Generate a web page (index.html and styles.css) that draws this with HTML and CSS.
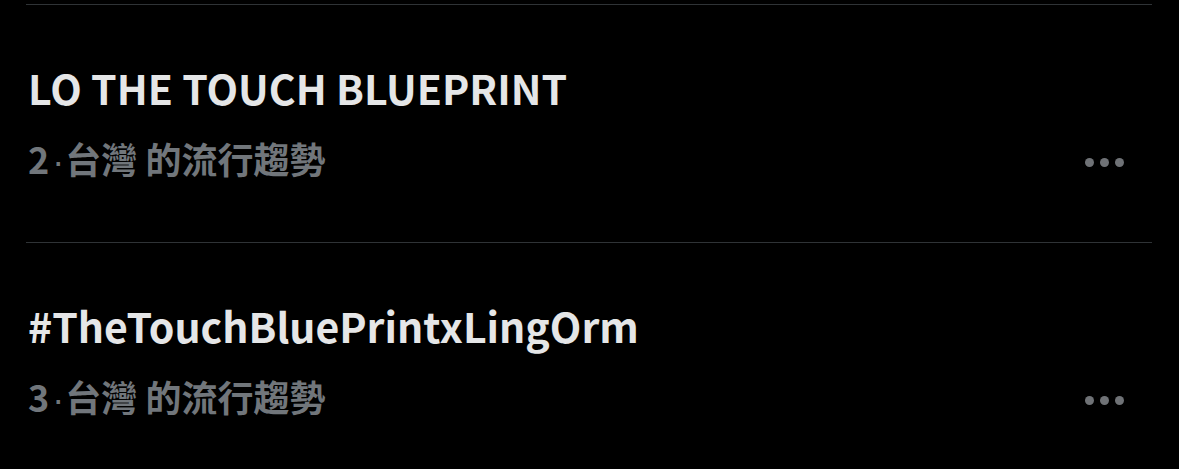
FILE: index.html
```html
<!DOCTYPE html>
<html lang="zh-Hant">
<head>
    <meta charset="UTF-8">
    <meta name="viewport" content="width=device-width, initial-scale=1.0">
    <title>流行趨勢</title>
    <link rel="stylesheet" href="styles.css">
</head>
<body>
    <main class="trends">
        <!-- each trend: name on top, rank + place below, more button on the right -->
        <article class="trend">
            <h2 class="trend-name">LO THE TOUCH BLUEPRINT</h2>
            <div class="trend-meta">
                <span class="trend-rank">2<span class="sep">·</span>台灣 的流行趨勢</span>
                <button class="more" type="button" aria-label="更多">
                    <span class="dot"></span><span class="dot"></span><span class="dot"></span>
                </button>
            </div>
        </article>
        <article class="trend">
            <h2 class="trend-name">#TheTouchBluePrintxLingOrm</h2>
            <div class="trend-meta">
                <span class="trend-rank">3<span class="sep">·</span>台灣 的流行趨勢</span>
                <button class="more" type="button" aria-label="更多">
                    <span class="dot"></span><span class="dot"></span><span class="dot"></span>
                </button>
            </div>
        </article>
    </main>
</body>
</html>
```

FILE: styles.css
```css
/* Global Styles */
body {
    margin: 0;
    padding: 0;
    background-color: #000;
    color: #e7e9ea;
    font-family: "Noto Sans CJK TC", "Noto Sans", sans-serif;
}

.trends {
    padding: 4px 27px 0 26px;
}

/* Trend rows */
.trend {
    border-top: 1px solid #2f3336;
    padding: 57px 0 60px 2px;
}

.trend-name {
    margin: 0;
    font-size: 41px;
    line-height: 50px;
    font-weight: 700;
    color: #e5e6e7;
}

.trend-meta {
    display: flex;
    justify-content: space-between;
    align-items: center;
    margin-top: 25px;
    height: 45px;
}

.trend-rank {
    font-size: 36px;
    line-height: 44px;
    font-weight: 700;
    color: #71767b;
}

/* narrow latin middle dot between rank and place */
.sep {
    font-family: "Liberation Sans", sans-serif;
    font-weight: 400;
    margin: 0 1px 0 3px;
}

/* More button (three dots) */
.more {
    display: flex;
    gap: 6px;
    padding: 0;
    margin: 6px 28px 0 0;
    background: none;
    border: none;
    cursor: pointer;
}

.dot {
    width: 9px;
    height: 9px;
    border-radius: 50%;
    background-color: #6f7276;
}
```
